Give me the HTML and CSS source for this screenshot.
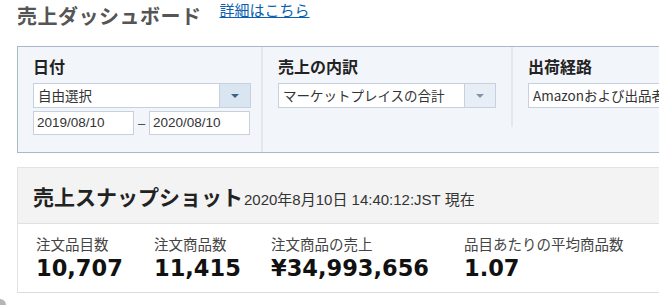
FILE: index.html
```html
<!DOCTYPE html>
<html lang="ja">
<head>
    <meta charset="UTF-8">
    <meta name="viewport" content="width=device-width, initial-scale=1.0">
    <title>売上ダッシュボード</title>
    <link rel="stylesheet" href="styles.css">
</head>
<body>
    <div class="page">
        <div class="title-row">
            <h1>売上ダッシュボード</h1>
            <a href="#" class="help-link">詳細はこちら</a>
        </div>

        <div class="filters">
            <div class="filter filter-date">
                <div class="filter-label">日付</div>
                <div class="select wide">
                    <span class="select-text">自由選択</span>
                    <span class="select-arrow"></span>
                </div>
                <div class="date-range">
                    <div class="date-input">2019/08/10</div>
                    <span class="dash">–</span>
                    <div class="date-input">2020/08/10</div>
                </div>
            </div>
            <div class="filter filter-breakdown">
                <div class="filter-label">売上の内訳</div>
                <div class="select wide">
                    <span class="select-text">マーケットプレイスの合計</span>
                    <span class="select-arrow light"></span>
                </div>
            </div>
            <div class="filter filter-channel">
                <div class="filter-label">出荷経路</div>
                <div class="select channel">
                    <span class="select-text">Amazonおよび出品者</span>
                </div>
            </div>
        </div>

        <div class="snapshot">
            <div class="snapshot-head">
                <h2>売上スナップショット</h2>
                <span class="stamp">2020年8月10日 14:40:12:JST 現在</span>
            </div>
            <div class="metrics">
                <div class="metric m1">
                    <div class="metric-label">注文品目数</div>
                    <div class="metric-value">10,707</div>
                </div>
                <div class="metric m2">
                    <div class="metric-label">注文商品数</div>
                    <div class="metric-value">11,415</div>
                </div>
                <div class="metric m3">
                    <div class="metric-label">注文商品の売上</div>
                    <div class="metric-value">¥34,993,656</div>
                </div>
                <div class="metric m4">
                    <div class="metric-label">品目あたりの平均商品数</div>
                    <div class="metric-value">1.07</div>
                </div>
            </div>
        </div>
    </div>
    <div class="corner-dot"></div>
</body>
</html>
```

FILE: styles.css
```css
body {
    margin: 0;
    overflow: hidden;
    background: #fff;
    font-family: "Noto Sans CJK JP", "Liberation Sans", sans-serif;
    color: #333;
}
.page {
    width: 900px;
    padding-left: 17px;
}
.title-row {
    display: flex;
    align-items: flex-start;
    gap: 18px;
    height: 46px;
}
h1 {
    margin: 0;
    padding-top: 2px;
    font-size: 20px;
    line-height: 28px;
    font-weight: bold;
    color: #555;
    letter-spacing: 0.5px;
}
.help-link {
    font-size: 15px;
    line-height: 20px;
    color: #0a5fb0;
    text-decoration: underline;
}
.filters {
    display: flex;
    height: 105px;
    border: 1px solid #a9b8c9;
    background: #f2f5fa;
}
.filter {
    padding: 8px 15px 0 15px;
}
.filter-date {
    width: 216px;
    padding-right: 12px;
    border-right: 2px solid #e2e8f0;
}
.filter-breakdown {
    width: 218px;
    height: 72px;
    border-right: 2px solid #e2e8f0;
}
.filter-label {
    font-size: 16px;
    line-height: 22px;
    font-weight: bold;
    color: #222;
    margin-bottom: 6px;
}
.select {
    display: flex;
    height: 23px;
    border: 1px solid #c6d1dd;
    background: #fff;
    font-size: 13.5px;
    line-height: 23px;
}
.select.wide {
    width: 216px;
}
.select.channel {
    width: 300px;
}
.select-text {
    flex: 1;
    padding-left: 4px;
    white-space: nowrap;
    overflow: hidden;
}
.select-arrow {
    width: 30px;
    border-left: 1px solid #c6d1dd;
    background: #d9e6f2;
    display: flex;
    align-items: center;
    justify-content: center;
}
.select-arrow::after {
    content: "";
    border-left: 4px solid transparent;
    border-right: 4px solid transparent;
    border-top: 4px solid #3e6183;
}
.select-arrow.light {
    background: #e8eef5;
}
.select-arrow.light::after {
    border-top-color: #7d97b0;
}
.date-range {
    display: flex;
    align-items: center;
    margin-top: 3px;
    width: 218px;
}
.date-input {
    width: 96px;
    height: 22px;
    border: 1px solid #c6d1dd;
    background: #fff;
    padding-left: 3px;
    font-family: "Liberation Sans", sans-serif;
    font-size: 13.5px;
    line-height: 22px;
}
.dash {
    width: 15px;
    text-align: center;
    font-family: "Liberation Sans", sans-serif;
    font-size: 13px;
    color: #444;
}
.snapshot {
    margin-top: 14px;
    border-top: 1px solid #e3e3e3;
    border-left: 1px solid #e3e3e3;
    border-bottom: 1px solid #dcdcdc;
}
.snapshot-head {
    display: flex;
    align-items: baseline;
    gap: 1px;
    height: 56px;
    padding-left: 15px;
    background: #f3f3f3;
    border-bottom: 1px solid #e0e0e0;
    box-sizing: border-box;
    padding-top: 13px;
}
h2 {
    margin: 0;
    font-size: 21px;
    line-height: 30px;
    font-weight: bold;
    color: #222;
}
.stamp {
    font-family: "Liberation Sans", "Noto Sans CJK JP", sans-serif;
    font-size: 15px;
    color: #333;
}
.metrics {
    display: flex;
    padding: 10px 0 9px 18px;
}
.metric-label {
    font-size: 14.5px;
    line-height: 20px;
    color: #444;
}
.metric-value {
    font-family: "DejaVu Sans", sans-serif;
    font-size: 22.5px;
    line-height: 29px;
    font-weight: bold;
    color: #111;
}
.m1 { width: 118px; }
.m2 { width: 117px; }
.m3 { width: 193px; }
.corner-dot {
    position: fixed;
    left: -6px;
    bottom: -6px;
    width: 12px;
    height: 12px;
    border-radius: 50%;
    background: #b5b5b5;
}
```
